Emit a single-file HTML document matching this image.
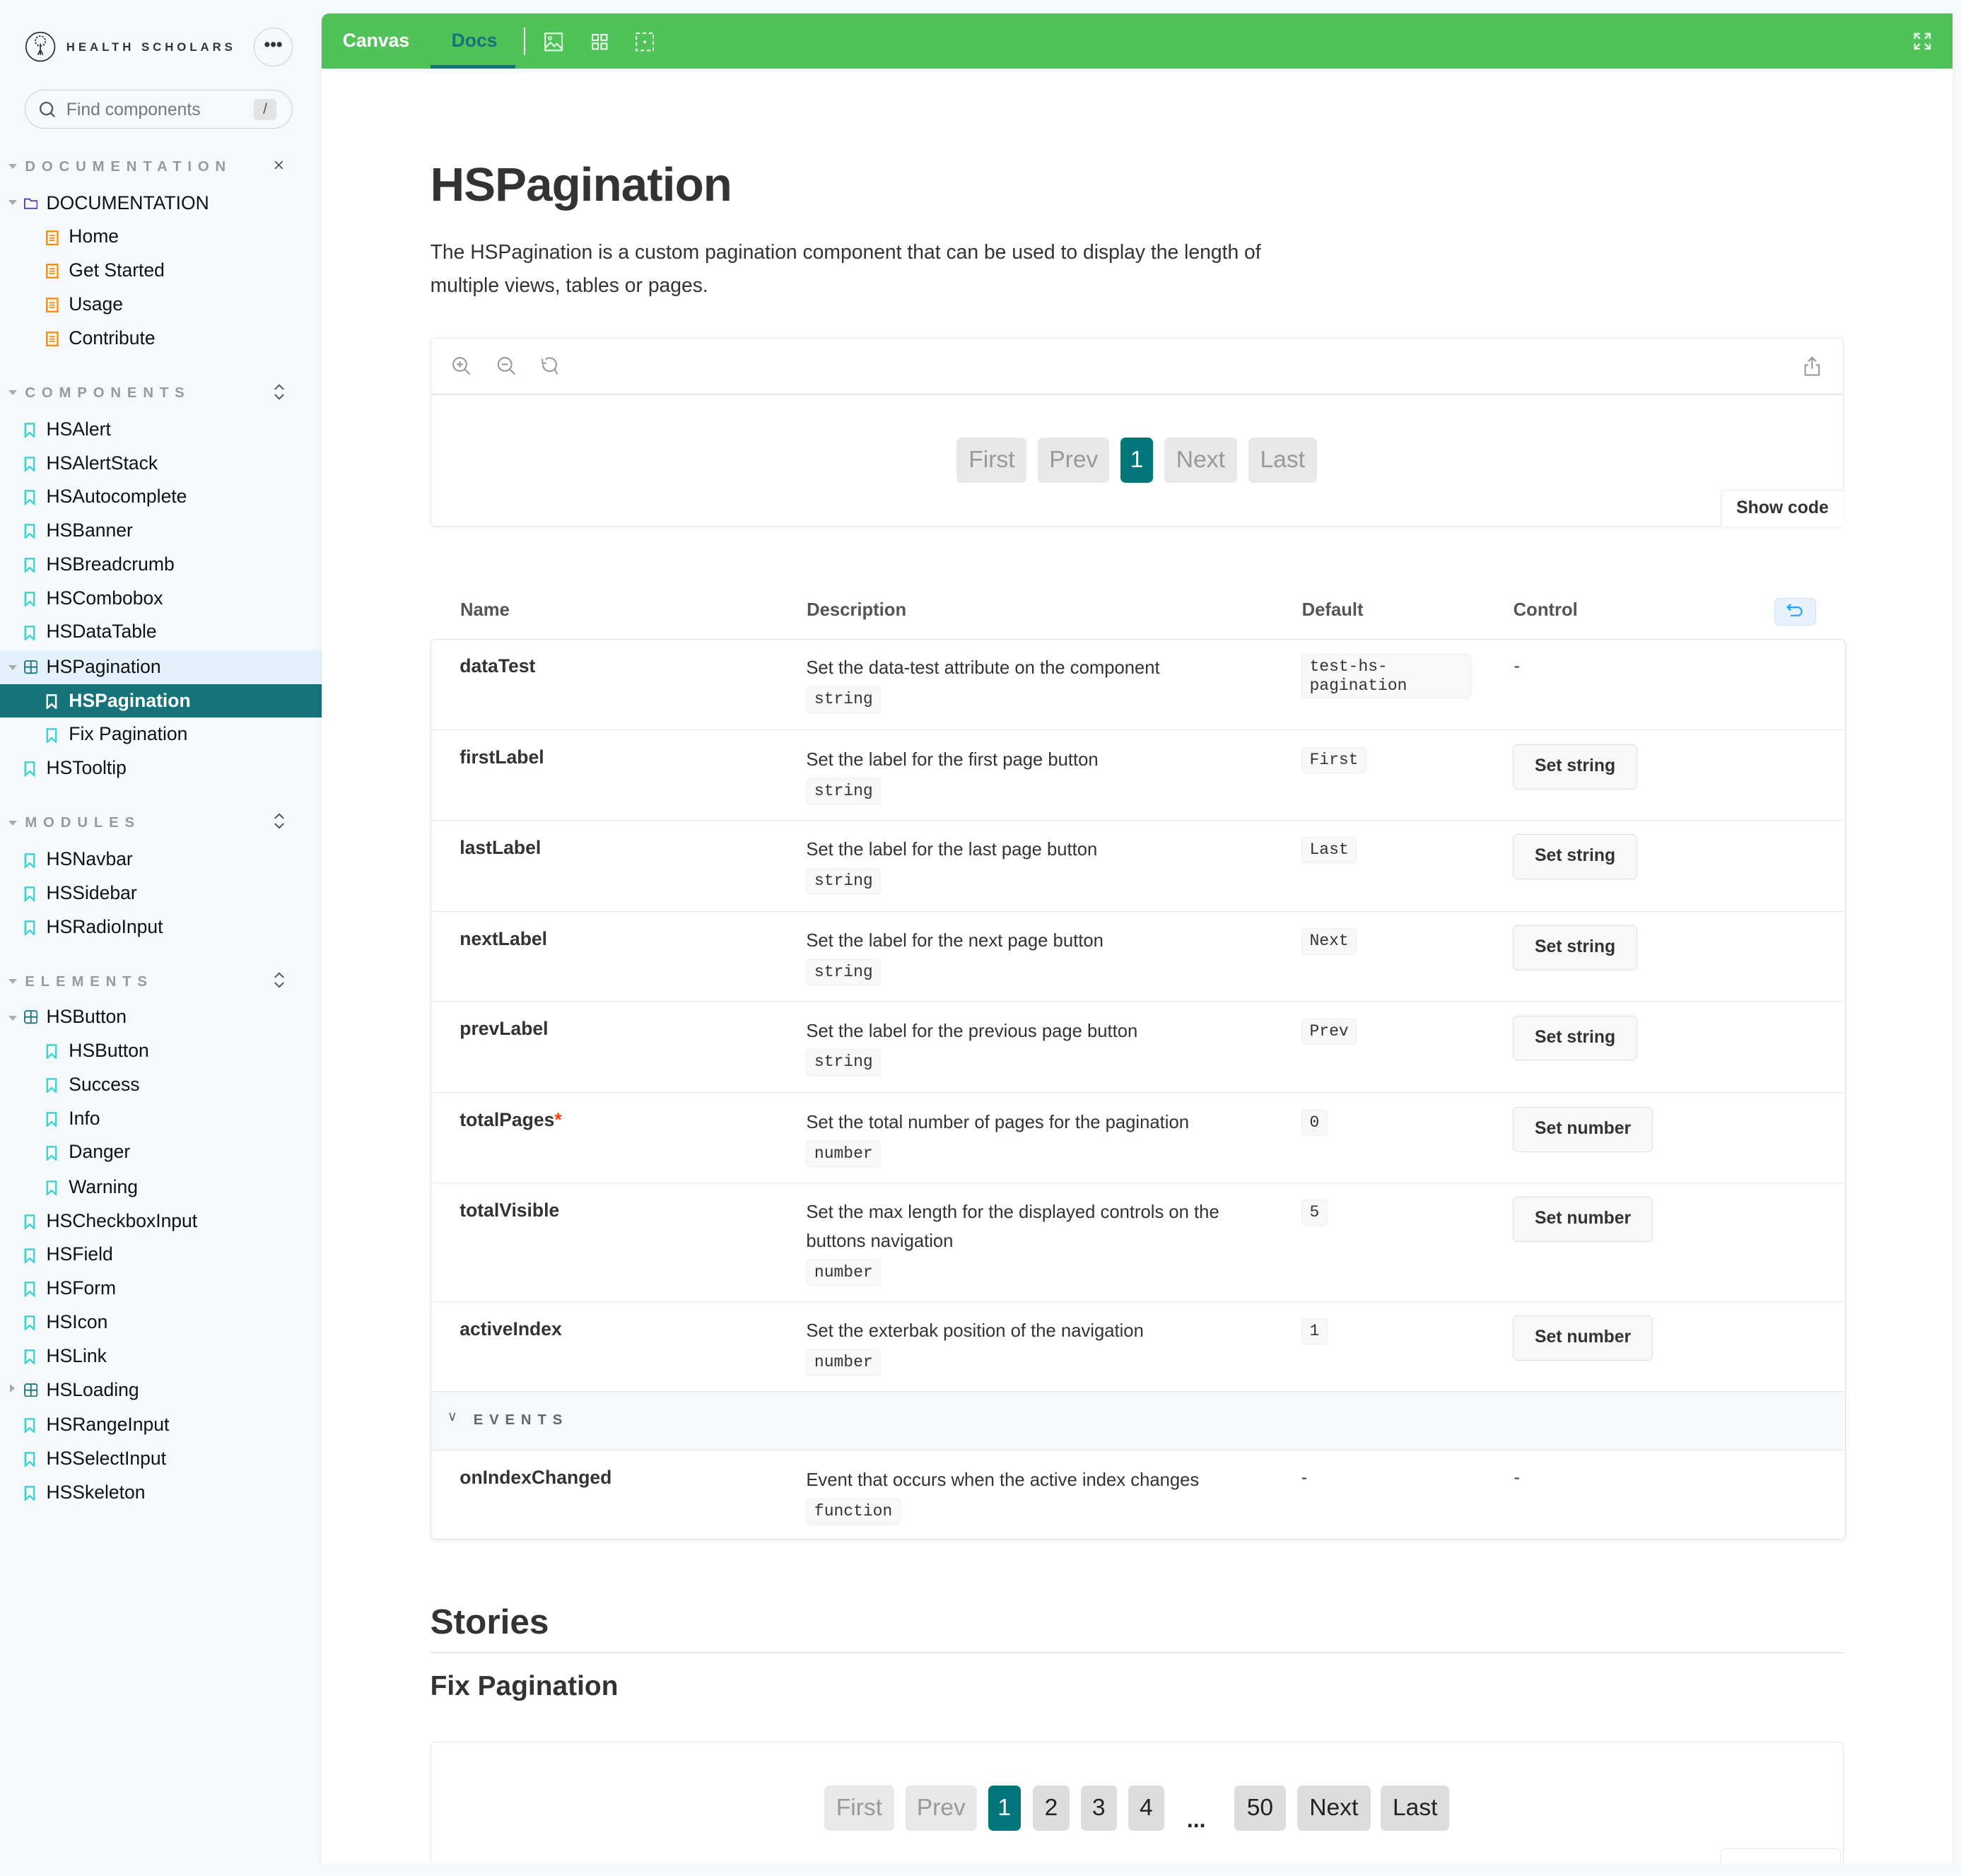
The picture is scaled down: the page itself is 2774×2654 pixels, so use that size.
<!DOCTYPE html>
<html><head><meta charset="utf-8"><style>
*{box-sizing:border-box;margin:0;padding:0}
html,body{width:2774px;height:2654px;overflow:hidden;background:#f6f9fc}
#w{position:relative;width:1568px;height:1500px;zoom:1.76913;font-family:"Liberation Sans",sans-serif;color:#333;background:#f6f9fc;overflow:hidden}
.a{position:absolute}
.si{position:absolute;height:27px;line-height:27px;font-size:15px;color:#111;white-space:nowrap}
.si svg{position:absolute;top:7px}
.hd{position:absolute;font-size:11.5px;font-weight:bold;letter-spacing:5px;color:#999}
.tri{position:absolute;width:0;height:0;border-left:3.5px solid transparent;border-right:3.5px solid transparent;border-top:4px solid #aaa}
.pb{position:absolute;height:36px;line-height:36px;text-align:center;font-size:19px;border-radius:4px;background:#e8e8e8;color:#999}
.pb.on{background:#00757a;color:#fff}
.pb.dk{background:#ddd;color:#222}
.row{position:absolute;left:0;width:1130px;border-top:1px solid #e6e6e6}
.nm{position:absolute;left:23px;font-weight:bold;font-size:15px;color:#333}
.ds{position:absolute;left:300px;font-size:14.5px;color:#333;line-height:23px}
.cd{display:inline-block;font-family:"Liberation Mono",monospace;font-size:13px;background:#f8f8f8;border:1px solid #eee;border-radius:3px;padding:0 6px;line-height:20px;color:#333}
.df{position:absolute;left:696px}
.bt{position:absolute;left:865px;height:36px;line-height:34px;padding:0 17px;border:1px solid #ddd;border-radius:4px;background:#f8f8f8;font-weight:bold;font-size:14px;color:#333}
.dash{position:absolute;font-size:14px}
</style></head><body><div id="w">

<!-- sidebar -->
<svg class="a" style="left:20px;top:25px" width="25" height="25" viewBox="0 0 25 25"><circle cx="12.5" cy="12.5" r="11.5" fill="none" stroke="#333" stroke-width="1"/><circle cx="12.5" cy="8" r="4" fill="none" stroke="#333" stroke-dasharray="1.5 1"/><path d="M12.5 10v9M10.5 19l2-4 2 4" stroke="#333" fill="none"/></svg>
<div class="a" style="left:53px;top:32px;font-size:9.5px;font-weight:bold;letter-spacing:2.8px;color:#333">HEALTH SCHOLARS</div>
<div class="a" style="left:203px;top:22px;width:31px;height:31px;border:1px solid #ccc;border-radius:50%;text-align:center;line-height:27px;font-size:14px;font-weight:bold;color:#333">•••</div>
<div class="a" style="left:20px;top:72px;width:214px;height:31px;border:1px solid #ccc;border-radius:16px;background:#f6f9fc"></div>
<svg class="a" style="left:31px;top:81px" width="14" height="14" viewBox="0 0 14 14"><circle cx="6" cy="6" r="4.8" fill="none" stroke="#555" stroke-width="1.3"/><path d="M9.5 9.5l3 3" stroke="#555" stroke-width="1.3"/></svg>
<div class="a" style="left:53px;top:80px;font-size:14px;color:#777">Find components</div>
<div class="a" style="left:203px;top:79px;width:18px;height:17px;background:#e3e3e3;border-radius:3px;text-align:center;font-size:12px;line-height:17px;color:#555">/</div>

<div class="tri" style="left:7px;top:131px"></div><div class="hd" style="left:20px;top:127px">DOCUMENTATION</div>
<div class="a" style="left:218px;top:125px;font-size:12px;color:#555">⨯</div>
<div class="tri" style="left:7px;top:160px"></div>
<div class="si" style="left:18px;top:149px"><svg width="11" height="11" style="left:1px;top:8px" viewBox="0 0 11 11"><path d="M.5 2h4l1 1.5h5v6H.5z" fill="none" stroke="#5b3fb0" stroke-width="1.1"/></svg><span style="margin-left:19px">DOCUMENTATION</span></div>
<div id="docs"></div>

<div class="tri" style="left:7px;top:312px"></div><div class="hd" style="left:20px;top:308px">COMPONENTS</div>
<div class="tri" style="left:7px;top:656px"></div><div class="hd" style="left:20px;top:652px">MODULES</div>
<div class="tri" style="left:7px;top:783px"></div><div class="hd" style="left:20px;top:779px">ELEMENTS</div>
<svg class="a" style="left:219px;top:307px" width="9" height="13" viewBox="0 0 9 13"><path d="M1 4.5l3.5-3.5 3.5 3.5M1 8.5l3.5 3.5 3.5-3.5" fill="none" stroke="#555" stroke-width="1.1"/></svg>
<svg class="a" style="left:219px;top:650px" width="9" height="13" viewBox="0 0 9 13"><path d="M1 4.5l3.5-3.5 3.5 3.5M1 8.5l3.5 3.5 3.5-3.5" fill="none" stroke="#555" stroke-width="1.1"/></svg>
<svg class="a" style="left:219px;top:777px" width="9" height="13" viewBox="0 0 9 13"><path d="M1 4.5l3.5-3.5 3.5 3.5M1 8.5l3.5 3.5 3.5-3.5" fill="none" stroke="#555" stroke-width="1.1"/></svg>
<div class="a" style="left:0;top:520px;width:257px;height:27px;background:#e4f1fb"></div>
<div class="a" style="left:0;top:547px;width:257px;height:27px;background:#17737a"></div>
<div id="items"></div>

<!-- main panel -->
<div class="a" style="left:257px;top:11px;width:1304px;height:1479px;background:#fff;border-radius:6px 0 0 0;box-shadow:0 1px 4px rgba(0,0,0,.08)"></div>
<div class="a" style="left:257px;top:11px;width:1304px;height:44px;background:#51c25a;border-radius:6px 0 0 0"></div>
<div class="a" style="left:274px;top:24px;font-size:15px;font-weight:bold;color:#fff">Canvas</div>
<div class="a" style="left:361px;top:24px;font-size:15px;font-weight:bold;color:#17737a">Docs</div>
<div class="a" style="left:344px;top:52px;width:68px;height:3px;background:#17737a"></div>
<div class="a" style="left:419px;top:22px;width:1px;height:22px;background:#fff"></div>
<svg class="a" style="left:435px;top:26px" width="15" height="15" viewBox="0 0 15 15"><rect x=".7" y=".7" width="13.6" height="13.6" fill="none" stroke="#e9f7ea" stroke-width="1.2"/><circle cx="4.5" cy="4.5" r="1.2" fill="none" stroke="#e9f7ea"/><path d="M1 12l4-4 3 3 2-2 4 4" fill="none" stroke="#e9f7ea" stroke-width="1.2"/></svg>
<svg class="a" style="left:473px;top:27px" width="13" height="13" viewBox="0 0 13 13" fill="none" stroke="#e9f7ea" stroke-width="1.2"><rect x=".6" y=".6" width="4.5" height="4.5"/><rect x="7.6" y=".6" width="4.5" height="4.5"/><rect x=".6" y="7.6" width="4.5" height="4.5"/><rect x="7.6" y="7.6" width="4.5" height="4.5"/></svg>
<svg class="a" style="left:508px;top:26px" width="15" height="15" viewBox="0 0 15 15" fill="none" stroke="#e9f7ea" stroke-width="1.2" stroke-dasharray="3 2"><rect x=".6" y=".6" width="13.8" height="13.8"/><circle cx="7.5" cy="7.5" r=".6" fill="#e9f7ea"/></svg>
<svg class="a" style="left:1530px;top:26px" width="14" height="14" viewBox="0 0 14 14" fill="none" stroke="#e9f7ea" stroke-width="1.3"><path d="M1 5V1h4M9 1h4v4M13 9v4H9M5 13H1V9M1 1l4 4M13 1L9 5M13 13L9 9M1 13l4-4"/></svg>

<div class="a" style="left:344px;top:126px;font-size:38px;font-weight:bold;color:#333;letter-spacing:-.5px">HSPagination</div>
<div class="a" style="left:344px;top:188px;width:720px;font-size:16px;line-height:27px;color:#333">The HSPagination is a custom pagination component that can be used to display the length of multiple views, tables or pages.</div>

<!-- preview -->
<div class="a" style="left:344px;top:270px;width:1130px;height:151px;border:1px solid #e6e6e6;border-radius:4px;box-shadow:0 1px 3px rgba(0,0,0,.06)"></div>
<div class="a" style="left:345px;top:315px;width:1128px;height:1px;background:#e6e6e6"></div>
<svg class="a" style="left:361px;top:285px" width="85" height="16" viewBox="0 0 85 16" fill="none" stroke="#999" stroke-width="1.2"><circle cx="6.5" cy="6.5" r="5.3"/><path d="M10.5 10.5l4 4M4 6.5h5M6.5 4v5"/><circle cx="42.5" cy="6.5" r="5.3"/><path d="M46.5 10.5l4 4M40 6.5h5"/><path d="M75 2.5a5.3 5.3 0 1 1-2 4M72.5 2v3.5h3"/><path d="M82.5 10.5l2 4"/></svg>
<svg class="a" style="left:1442px;top:285px" width="14" height="16" viewBox="0 0 14 16" fill="none" stroke="#999" stroke-width="1.2"><path d="M7 1v9M4 4l3-3 3 3M4 7H1.5v8h11V7H10"/></svg>
<div class="pb" style="left:765px;top:350px;width:56px">First</div>
<div class="pb" style="left:830px;top:350px;width:57px">Prev</div>
<div class="pb on" style="left:896px;top:350px;width:26px">1</div>
<div class="pb" style="left:931px;top:350px;width:58px">Next</div>
<div class="pb" style="left:998px;top:350px;width:55px">Last</div>
<div class="a" style="left:1376px;top:392px;width:98px;height:29px;border:1px solid #e6e6e6;border-right:none;border-bottom:none;border-radius:4px 0 0 0;background:#fff;text-align:center;line-height:28px;font-size:14px;font-weight:bold;color:#333">Show code</div>

<!-- table -->
<div class="a" style="left:368px;top:480px;font-size:14.5px;font-weight:bold;color:#555">Name</div>
<div class="a" style="left:645px;top:480px;font-size:14.5px;font-weight:bold;color:#555">Description</div>
<div class="a" style="left:1041px;top:480px;font-size:14.5px;font-weight:bold;color:#555">Default</div>
<div class="a" style="left:1210px;top:480px;font-size:14.5px;font-weight:bold;color:#555">Control</div>
<div class="a" style="left:1419px;top:478px;width:33px;height:22px;border:1px solid #cfe0ee;border-radius:4px;background:#e8f2fd"></div>
<svg class="a" style="left:1428px;top:482px" width="15" height="13" viewBox="0 0 15 13" fill="none" stroke="#1ea7fd" stroke-width="1.3"><path d="M4 1L1.5 3.5 4 6M1.5 3.5h8a3.3 3.3 0 0 1 0 6.6H4"/></svg>

<div class="a" style="left:344px;top:511px;width:1132px;height:720px;border:1px solid #e0e0e0;border-radius:4px;box-shadow:0 1px 3px rgba(0,0,0,.08);overflow:hidden">
 <div class="row" style="top:-1px;height:73px"><div class="nm" style="top:13px">dataTest</div><div class="ds" style="top:12px">Set the data-test attribute on the component<br><span class="cd" style="margin-top:3px">string</span></div><div class="df" style="top:12px"><span class="cd" style="display:block;width:136px;line-height:15px;padding:2px 6px">test-hs-<br>pagination</span></div><div class="dash" style="left:866px;top:14px">-</div></div>
 <div class="row" style="top:72px;height:72px"><div class="nm" style="top:13px">firstLabel</div><div class="ds" style="top:12px">Set the label for the first page button<br><span class="cd" style="margin-top:3px">string</span></div><div class="df" style="top:12px"><span class="cd">First</span></div><div class="bt" style="top:11px">Set string</div></div>
 <div class="row" style="top:144px;height:73px"><div class="nm" style="top:13px">lastLabel</div><div class="ds" style="top:12px">Set the label for the last page button<br><span class="cd" style="margin-top:3px">string</span></div><div class="df" style="top:12px"><span class="cd">Last</span></div><div class="bt" style="top:11px">Set string</div></div>
 <div class="row" style="top:217px;height:72px"><div class="nm" style="top:13px">nextLabel</div><div class="ds" style="top:12px">Set the label for the next page button<br><span class="cd" style="margin-top:3px">string</span></div><div class="df" style="top:12px"><span class="cd">Next</span></div><div class="bt" style="top:11px">Set string</div></div>
 <div class="row" style="top:289px;height:73px"><div class="nm" style="top:13px">prevLabel</div><div class="ds" style="top:12px">Set the label for the previous page button<br><span class="cd" style="margin-top:3px">string</span></div><div class="df" style="top:12px"><span class="cd">Prev</span></div><div class="bt" style="top:11px">Set string</div></div>
 <div class="row" style="top:362px;height:72px"><div class="nm" style="top:13px">totalPages<span style="color:#ff4400">*</span></div><div class="ds" style="top:12px">Set the total number of pages for the pagination<br><span class="cd" style="margin-top:3px">number</span></div><div class="df" style="top:12px"><span class="cd">0</span></div><div class="bt" style="top:11px">Set number</div></div>
 <div class="row" style="top:434px;height:95px"><div class="nm" style="top:13px">totalVisible</div><div class="ds" style="top:12px;width:370px">Set the max length for the displayed controls on the buttons navigation<br><span class="cd" style="margin-top:3px">number</span></div><div class="df" style="top:12px"><span class="cd">5</span></div><div class="bt" style="top:11px">Set number</div></div>
 <div class="row" style="top:529px;height:72px"><div class="nm" style="top:13px">activeIndex</div><div class="ds" style="top:12px">Set the exterbak position of the navigation<br><span class="cd" style="margin-top:3px">number</span></div><div class="df" style="top:12px"><span class="cd">1</span></div><div class="bt" style="top:11px">Set number</div></div>
 <div class="row" style="top:601px;height:47px;background:#f6f9fc"><div class="a" style="left:13px;top:13px;font-size:11px;color:#666">∨</div><div class="a" style="left:34px;top:16px;font-size:11.5px;font-weight:bold;letter-spacing:5px;color:#666">EVENTS</div></div>
 <div class="row" style="top:648px;height:72px"><div class="nm" style="top:13px">onIndexChanged</div><div class="ds" style="top:12px">Event that occurs when the active index changes<br><span class="cd" style="margin-top:3px">function</span></div><div class="dash" style="left:696px;top:14px">-</div><div class="dash" style="left:866px;top:14px">-</div></div>
</div>

<div class="a" style="left:344px;top:1281px;font-size:28px;font-weight:bold;color:#333">Stories</div>
<div class="a" style="left:344px;top:1321px;width:1130px;height:1px;background:#e6e6e6"></div>
<div class="a" style="left:344px;top:1336px;font-size:22px;font-weight:bold;color:#333">Fix Pagination</div>
<div class="a" style="left:344px;top:1393px;width:1130px;height:120px;border:1px solid #e6e6e6;border-radius:4px;box-shadow:0 1px 3px rgba(0,0,0,.06)"></div>
<div class="pb" style="left:659px;top:1428px;width:56px">First</div>
<div class="pb" style="left:724px;top:1428px;width:57px">Prev</div>
<div class="pb on" style="left:790px;top:1428px;width:26px">1</div>
<div class="pb dk" style="left:826px;top:1428px;width:29px">2</div>
<div class="pb dk" style="left:864px;top:1428px;width:29px">3</div>
<div class="pb dk" style="left:902px;top:1428px;width:29px">4</div>
<div class="a" style="left:949px;top:1445px;font-size:18px;font-weight:bold;color:#222">...</div>
<div class="pb dk" style="left:987px;top:1428px;width:41px">50</div>
<div class="pb dk" style="left:1037px;top:1428px;width:59px">Next</div>
<div class="pb dk" style="left:1104px;top:1428px;width:55px">Last</div>
<div class="a" style="left:0;top:1490px;width:1568px;height:10px;background:#f6f9fc"></div>
<div class="a" style="left:1376px;top:1478px;width:96px;height:12px;border:1px solid #e6e6e6;border-bottom:none;border-radius:4px 4px 0 0;background:#fff"></div>

<script>
var bm='<svg width="9" height="12" viewBox="0 0 9 12"><path d="M1 .8h7v10.4L4.5 8 1 11.2z" fill="none" stroke="COL" stroke-width="1.4"/></svg>';
var doc='<svg width="10" height="12" viewBox="0 0 10 12"><rect x=".7" y=".7" width="8.6" height="10.6" fill="none" stroke="#ff8a00" stroke-width="1.3"/><path d="M2.8 4h4.4M2.8 6h4.4M2.8 8h4.4" stroke="#ff8a00"/></svg>';
var grp='<svg width="11" height="11" viewBox="0 0 11 11"><rect x=".6" y=".6" width="9.8" height="9.8" rx="1.5" fill="none" stroke="#1c7c80" stroke-width="1.1"/><path d="M5.5 1v9M1 5.5h9" stroke="#1c7c80" stroke-width="1.1"/></svg>';
var L=[[176,2,'d','Home'],[203,2,'d','Get Started'],[230,2,'d','Usage'],[257,2,'d','Contribute'],
[330,1,'b','HSAlert'],[357,1,'b','HSAlertStack'],[384,1,'b','HSAutocomplete'],[411,1,'b','HSBanner'],[438,1,'b','HSBreadcrumb'],[465,1,'b','HSCombobox'],[492,1,'b','HSDataTable'],[520,1,'g','HSPagination',1],[547,2,'s','HSPagination'],[574,2,'b','Fix Pagination'],[601,1,'b','HSTooltip'],
[674,1,'b','HSNavbar'],[701,1,'b','HSSidebar'],[728,1,'b','HSRadioInput'],
[800,1,'g','HSButton',1],[827,2,'b','HSButton'],[854,2,'b','Success'],[881,2,'b','Info'],[908,2,'b','Danger'],[936,2,'b','Warning'],[963,1,'b','HSCheckboxInput'],[990,1,'b','HSField'],[1017,1,'b','HSForm'],[1044,1,'b','HSIcon'],[1071,1,'b','HSLink'],[1098,1,'g','HSLoading',2],[1126,1,'b','HSRangeInput'],[1153,1,'b','HSSelectInput'],[1180,1,'b','HSSkeleton']];
var h='';
L.forEach(function(r){var x=r[1]==1?19:37,ic,st='';
if(r[2]=='d')ic=doc;else if(r[2]=='g')ic=grp;else if(r[2]=='s'){ic=bm.replace('COL','#fff');st='color:#fff;font-weight:bold;'}else ic=bm.replace('COL','#3fd4d4');
if(r[4]==1)h+='<div class="tri" style="left:7px;top:'+(r[0]+12)+'px"></div>';
if(r[4]==2)h+='<div class="a" style="left:8px;top:'+(r[0]+9)+'px;width:0;height:0;border-top:3.5px solid transparent;border-bottom:3.5px solid transparent;border-left:4px solid #aaa"></div>';
h+='<div class="si" style="left:'+x+'px;top:'+r[0]+'px;'+st+'">'+ic.replace('<svg','<svg style="position:absolute;left:0;top:8px"')+'<span style="margin-left:18px">'+r[3]+'</span></div>';});
document.getElementById('items').outerHTML=h;
</script>
</div></body></html>
